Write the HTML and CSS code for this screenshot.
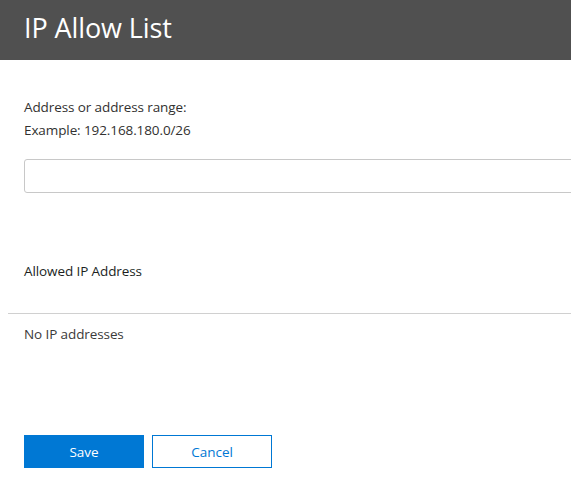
FILE: index.html
```html
<!DOCTYPE html>
<html>
<head>
<meta charset="utf-8">
<link rel="stylesheet" href="styles.css">
</head>
<body>
<header class="header"><h1 class="title">IP Allow List</h1></header>
<main class="content">
  <div class="form">
    <p class="label">Address or address range:</p>
    <p class="label example">Example: 192.168.180.0/26</p>
    <input class="field" type="text">
  </div>
  <h2 class="list-title">Allowed IP Address</h2>
  <div class="divider"></div>
  <p class="empty">No IP addresses</p>
  <div class="actions">
    <button class="btn primary">Save</button>
    <button class="btn secondary">Cancel</button>
  </div>
</main>
</body>
</html>
```
FILE: styles.css
```css
html, body { margin: 0; padding: 0; background: #fff; overflow: hidden; }
body { font-family: "Open Sans", "Noto Sans", sans-serif; color: #323130; width: 571px; }
.header { background: #505050; height: 60px; display: flex; align-items: center; padding-left: 24px; }
.title { margin: 0; color: #fff; font-weight: 400; font-size: 27px; letter-spacing: -0.1px; line-height: 1; position: relative; top: -3px; }
.content { padding: 0 0 0 8px; }
.form { padding: 36px 0 0 16px; overflow: hidden; }
.label { margin: 0; font-size: 13.5px; line-height: 23px; letter-spacing: -0.1px; }
.field { display: block; box-sizing: border-box; width: calc(100% + 20px); height: 34px; margin-top: 17px; border: 1px solid #c8c8c8; border-radius: 3px; }
.list-title { margin: 68px 0 0 16px; font-size: 13.5px; font-weight: 400; line-height: 20px; letter-spacing: -0.1px; color: #201f1e; }
.divider { margin-top: 32px; height: 1px; background: #d0d0d0; }
.empty { margin: 10px 0 0 16px; font-size: 13.5px; line-height: 20px; letter-spacing: -0.1px; color: #3b3a39; }
.actions { display: flex; gap: 8px; margin: 91px 0 0 16px; }
.btn { box-sizing: border-box; width: 120px; height: 33px; font-family: inherit; font-size: 13.5px; cursor: pointer; }
.primary { background: #0078d4; color: #fff; border: none; }
.secondary { background: #fff; color: #0078d4; border: 1px solid #0078d4; }
```
